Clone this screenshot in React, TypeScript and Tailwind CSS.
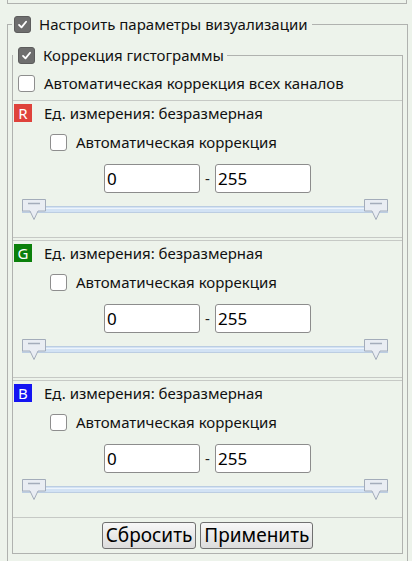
import React from 'react'

const Check = ({ checked }: { checked?: boolean }) =>
    checked ? (
        <span className="flex h-[17px] w-[17px] shrink-0 items-center justify-center rounded-[3px] border border-[#5c5c5c] bg-[#6e6e6e]">
            <svg viewBox="0 0 12 12" className="h-[11px] w-[11px]">
                <path d="M2.2 6.4 L4.9 9.1 L9.9 3" stroke="white" strokeWidth="2" fill="none" strokeLinecap="round" strokeLinejoin="round" />
            </svg>
        </span>
    ) : (
        <span className="block h-[17px] w-[17px] shrink-0 rounded-[3px] border border-[#8e8e8e] bg-white" />
    )

const Label = ({ children, ml }: { children: React.ReactNode; ml: string }) => (
    <span className={`${ml} text-[15px] leading-none text-[#111]`}>{children}</span>
)

const Thumb = ({ x }: { x: number }) => (
    <g transform={`translate(${x} 0)`}>
        <path d="M0.5 0.5 H23.5 V12 H16 L12 20.5 L8 12 H0.5 Z" fill="#e9edf3" stroke="#a3acba" />
        <line x1="6" y1="4.5" x2="18" y2="4.5" stroke="#a3acba" strokeWidth="1.5" />
    </g>
)

const Slider = () => (
    <svg width="366" height="23" viewBox="0 0 366 23" className="block">
        <rect x="0.5" y="7.5" width="365" height="6" fill="#d2e2f4" stroke="#bccde2" />
        <line x1="1" y1="9.5" x2="365" y2="9.5" stroke="#eef4fb" />
        <Thumb x={0} />
        <Thumb x={342} />
    </svg>
)

const Channel = ({ letter, color, first }: { letter: string; color: string; first?: boolean }) => (
    <div className={`flex h-[138px] flex-col border-y border-[#c6c9c5] ${first ? '' : 'mt-[2px]'}`}>
        <div className="mt-[3px] flex h-[18px] items-center pl-[1px]">
            <span
                className="flex h-[18px] w-[18px] items-center justify-center text-[15px] leading-none text-white"
                style={{ backgroundColor: color }}
            >
                {letter}
            </span>
            <Label ml="ml-[12px]">Ед. измерения: безразмерная</Label>
        </div>
        <div className="mt-[12px] flex h-[17px] items-center pl-[37px]">
            <Check />
            <Label ml="ml-[9px]">Автоматическая коррекция</Label>
        </div>
        <div className="mt-[13px] flex items-center justify-center">
            <div className="flex h-[29px] w-[96px] items-center rounded-[3px] border border-[#8c8c8c] bg-white pl-[2px] text-[17px] leading-none text-black">
                0
            </div>
            <span className="w-[15px] text-center text-[15px] leading-none text-[#222]">-</span>
            <div className="flex h-[29px] w-[96px] items-center rounded-[3px] border border-[#8c8c8c] bg-white pl-[2px] text-[17px] leading-none text-black">
                255
            </div>
        </div>
        <div className="ml-[9px] mt-[6px]">
            <Slider />
        </div>
    </div>
)

export default function App() {
    return (
        <div className="h-[561px] w-[412px] overflow-hidden bg-[#edf3eb]">
            <div className="ml-[7px] h-[4px] w-[400px] border-x border-b border-[#b0b2af]" />

            <fieldset className="ml-[7px] mt-[10px] h-[600px] w-[401px] border border-[#b0b2af] pl-[4px]">
                <legend className="ml-0 flex h-[20px] items-center pl-[2px] pr-[4px]">
                    <Check checked />
                    <Label ml="ml-[8px]">Настроить параметры визуализации</Label>
                </legend>

                <fieldset className="mt-[13px] w-[391px] border border-[#b0b2af]">
                    <legend className="flex h-[17px] items-center pl-[5px] pr-[3px]">
                        <Check checked />
                        <Label ml="ml-[8px]">Коррекция гистограммы</Label>
                    </legend>

                    <div className="mt-[11px] flex h-[17px] items-center pl-[5px]">
                        <Check />
                        <Label ml="ml-[9px]">Автоматическая коррекция всех каналов</Label>
                    </div>

                    <div className="mt-[8px]">
                        <Channel letter="R" color="#df423b" first />
                        <Channel letter="G" color="#0b800b" />
                        <Channel letter="B" color="#1414f2" />
                    </div>

                    <div className="mb-[4px] mt-[4px] flex justify-center gap-[4px]">
                        <button className="h-[27px] rounded-[3px] border border-[#707070] bg-gradient-to-b from-[#f7f7f7] to-[#dcdcdc] px-[3px] text-[19px] leading-none text-black">
                            Сбросить
                        </button>
                        <button className="h-[27px] rounded-[3px] border border-[#707070] bg-gradient-to-b from-[#f7f7f7] to-[#dcdcdc] px-[3px] text-[19px] leading-none text-black">
                            Применить
                        </button>
                    </div>
                </fieldset>
            </fieldset>
        </div>
    )
}
